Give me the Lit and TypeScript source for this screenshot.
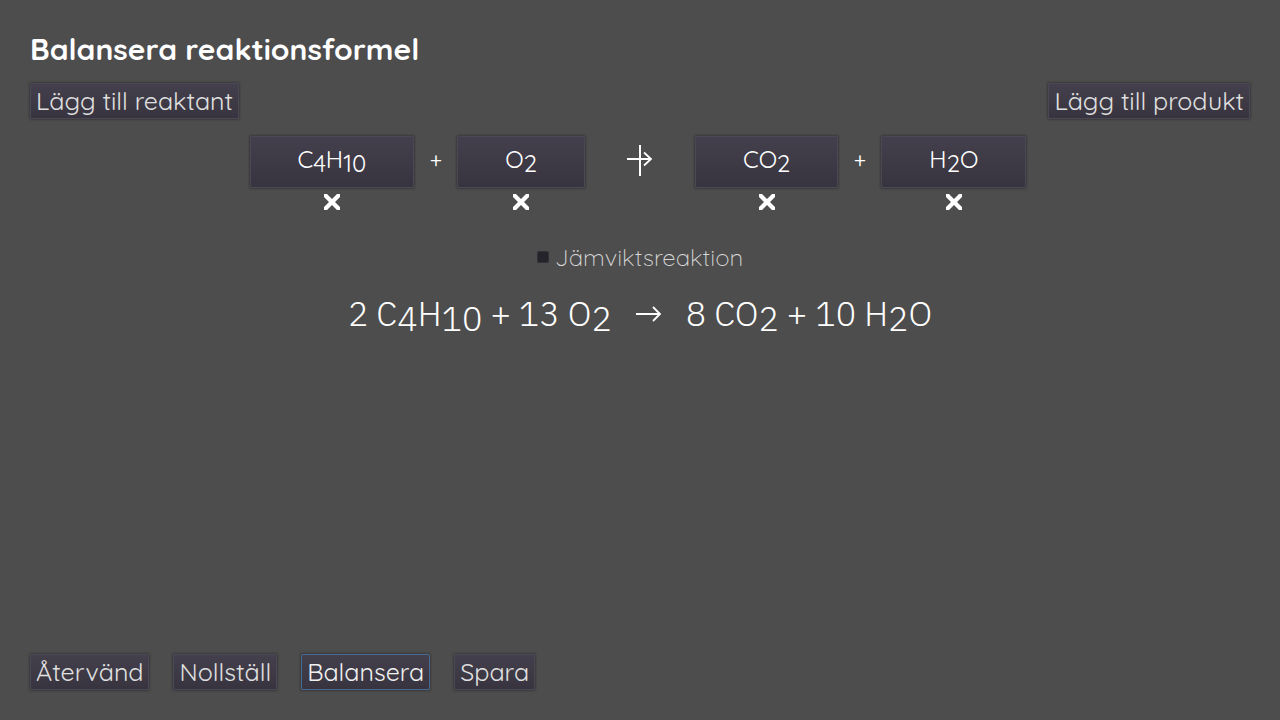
import { LitElement, html, css } from "lit";
import { customElement, property, state } from "lit/decorators.js";

const formula = (text: string) =>
  text.split(/(\d+)/).map((part) => (/^\d+$/.test(part) ? html`<sub>${part}</sub>` : part));

@customElement("compound-button")
export class CompoundButton extends LitElement {
  @property() compound = "";

  static styles = css`
    :host {
      display: flex;
      flex-direction: column;
      align-items: center;
      gap: 6px;
    }
    button {
      font: inherit;
      cursor: pointer;
    }
    .compound {
      height: 52px;
      padding: 0 47px 6px;
      color: #fff;
      font-size: 24px;
      line-height: 32px;
      background: linear-gradient(#433f4c, #38343f);
      border: 1px solid #4b4856;
      border-radius: 2px;
      box-shadow: 0 0 2px 1px #3a3a3c;
      white-space: nowrap;
    }
    sub {
      position: relative;
      top: 4px;
      font-size: inherit;
      line-height: 0;
      vertical-align: baseline;
    }
    .remove {
      display: flex;
      padding: 0;
      border: 0;
      background: none;
    }
  `;

  render() {
    return html`
      <button class="compound">${formula(this.compound)}</button>
      <button class="remove" aria-label="Ta bort ${this.compound}">
        <svg width="16" height="16" viewBox="0 0 16 16">
          <path d="M0 0h3l5 5 5-5h3v3l-5 5 5 5v3h-3l-5-5-5 5H0v-3l5-5-5-5z" fill="#fff" />
        </svg>
      </button>
    `;
  }
}

@customElement("app-root")
export class AppRoot extends LitElement {
  @state() private reactants = ["C4H10", "O2"];
  @state() private products = ["CO2", "H2O"];
  @state() private left = [[2, "C4H10"], [13, "O2"]];
  @state() private right = [[8, "CO2"], [10, "H2O"]];

  static styles = css`
    :host {
      display: flex;
      flex-direction: column;
      box-sizing: border-box;
      min-height: 100vh;
      padding: 28px 30px 30px;
      background: #4d4d4d;
      color: #fff;
      font-family: Quicksand, Lato, sans-serif;
    }
    h1 {
      margin: 0;
      font-size: 30px;
      line-height: 42px;
      font-weight: 700;
    }
    .toolbar {
      display: flex;
      justify-content: space-between;
      margin-top: 13px;
    }
    .action {
      height: 36px;
      padding: 0 5px;
      color: #e0e0e0;
      font: inherit;
      font-size: 25px;
      line-height: 32px;
      background: linear-gradient(#433f4c, #38343f);
      border: 1px solid #4b4856;
      border-radius: 2px;
      box-shadow: 0 0 2px 1px #3a3a3c;
      white-space: nowrap;
      cursor: pointer;
    }
    .action.focused {
      color: #f0f0f0;
      border-color: #466a92;
    }
    .equation {
      display: grid;
      grid-template-columns: 1fr 110px 1fr;
      margin-top: 17px;
    }
    .side {
      display: flex;
    }
    .side.reactants {
      justify-content: flex-end;
    }
    .plus {
      width: 43px;
      font-size: 22px;
      line-height: 48px;
      text-align: center;
    }
    .arrow {
      justify-self: center;
      margin-top: 9px;
    }
    .equilibrium {
      display: flex;
      align-items: center;
      align-self: center;
      gap: 6px;
      margin-top: 31px;
      color: #d8d8d8;
      font-size: 24px;
      line-height: 32px;
      font-weight: 300;
    }
    .equilibrium input {
      appearance: none;
      width: 12px;
      height: 12px;
      margin: 0;
      background: #25242a;
      border: 1px solid #323137;
      border-radius: 2px;
    }
    .result {
      display: flex;
      align-items: center;
      justify-content: center;
      margin: 16px 0 0;
      font-family: "IBM Plex Sans", "Open Sans", sans-serif;
      font-size: 34px;
      line-height: 48px;
      font-weight: 300;
    }
    .result svg {
      margin: 0 24px;
    }
    .result sub {
      position: relative;
      top: 5px;
      font-size: inherit;
      line-height: 0;
      vertical-align: baseline;
    }
    .footer {
      display: flex;
      gap: 24px;
      margin-top: auto;
    }
  `;

  private side(kind: string, items: string[]) {
    return html`<div class="side ${kind}">
      ${items.map(
        (c, i) => html`${i ? html`<span class="plus">+</span>` : ""}<compound-button .compound=${c}></compound-button>`
      )}
    </div>`;
  }

  private terms(items: (string | number)[][]) {
    return html`<span>${items.map(([n, c], i) => html`${i ? " + " : ""}${n} ${formula(String(c))}`)}</span>`;
  }

  render() {
    return html`
      <h1>Balansera reaktionsformel</h1>
      <div class="toolbar">
        <button class="action">Lägg till reaktant</button>
        <button class="action">Lägg till produkt</button>
      </div>
      <div class="equation">
        ${this.side("reactants", this.reactants)}
        <svg class="arrow" width="26" height="32" viewBox="0 0 26 32" fill="none" stroke="#fff" stroke-width="2">
          <path d="M0 14h24M13 0v31" />
          <path d="M17 7.5l7 6.5-7 6.5" stroke-width="1.8" />
        </svg>
        ${this.side("products", this.products)}
      </div>
      <label class="equilibrium"><input type="checkbox" />Jämviktsreaktion</label>
      <p class="result">
        ${this.terms(this.left)}
        <svg width="26" height="20" viewBox="0 0 26 20" fill="none" stroke="#fff" stroke-width="1.8">
          <path d="M0 11h24M17 4l7 7-7 7" />
        </svg>
        ${this.terms(this.right)}
      </p>
      <div class="footer">
        <button class="action">Återvänd</button>
        <button class="action">Nollställ</button>
        <button class="action focused">Balansera</button>
        <button class="action">Spara</button>
      </div>
    `;
  }
}
